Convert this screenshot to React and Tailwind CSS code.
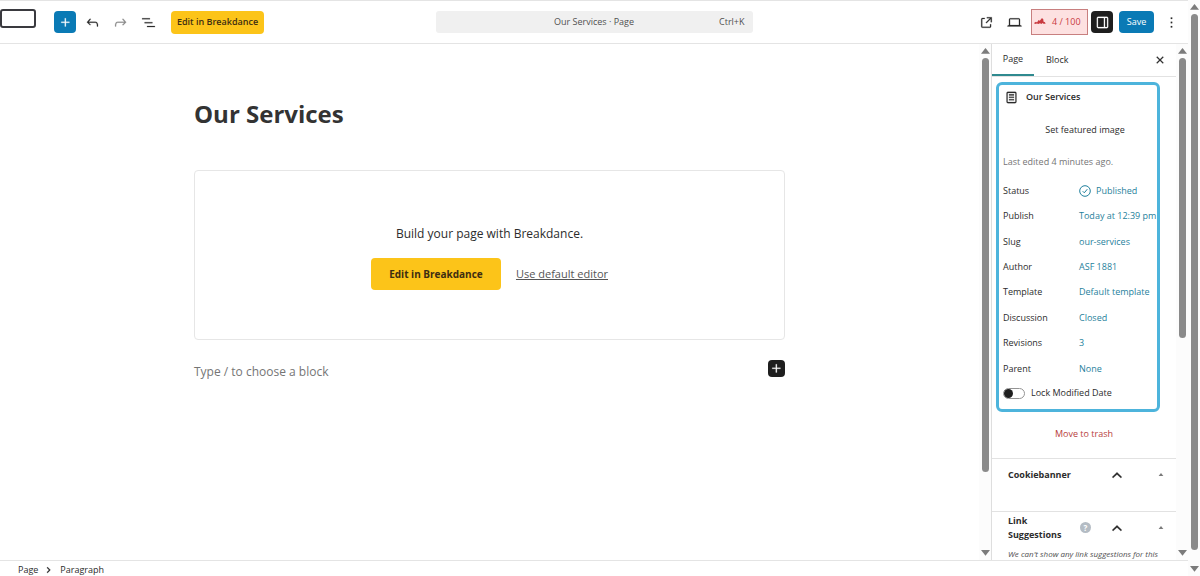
import { useState } from "react";

const icons = {
    plus: "M11 12.5V17.5H12.5V12.5H17.5V11H12.5V6H11V11H6V12.5H11Z",
    undo: "M18.3 11.7c-.6-.6-1.4-.9-2.3-.9H6.7l2.9-3.3-1.1-1-4.5 5L8.5 16l1-1-2.7-2.7H16c.5 0 .9.2 1.3.5 1 1 1 3.4 1 4.5v.3h1.5v-.2c0-1.5 0-4.3-1.5-5.7z",
    redo: "M15.6 6.5l-1.1 1 2.9 3.3H8c-.9 0-1.7.3-2.3.9-1.4 1.5-1.4 4.2-1.4 5.6v.2h1.5v-.3c0-1.1 0-3.5 1-4.5.3-.3.7-.5 1.3-.5h9.2L14.5 15l1.1 1.1 4.6-4.6-4.6-5z",
    list: "M3 6h11v1.5H3V6Zm3.5 5.5h11V13h-11v-1.5ZM21 17H10v1.5h11V17Z",
    external: "M19.5 4.5h-7V6h4.44l-5.97 5.97 1.06 1.06L18 7.06v4.44h1.5v-7Zm-13 1a2 2 0 0 0-2 2v10a2 2 0 0 0 2 2h10a2 2 0 0 0 2-2v-3H17v3a.5.5 0 0 1-.5.5h-10a.5.5 0 0 1-.5-.5v-10a.5.5 0 0 1 .5-.5h3V5.5h-3Z",
    desktop: "M20.5 16h-.7V8c0-1.1-.9-2-2-2H6.2c-1.1 0-2 .9-2 2v8h-.7c-.8 0-1.5.7-1.5 1.5h20c0-.8-.7-1.5-1.5-1.5zM5.7 8c0-.3.2-.5.5-.5h11.6c.3 0 .5.2.5.5v7.6H5.7V8z",
    drawer: "M18 4H6c-1.1 0-2 .9-2 2v12c0 1.1.9 2 2 2h12c1.1 0 2-.9 2-2V6c0-1.1-.9-2-2-2zm-4 14.5H6c-.3 0-.5-.2-.5-.5V6c0-.3.2-.5.5-.5h8v13zm4.5-.5c0 .3-.2.5-.5.5h-2.5v-13H18c.3 0 .5.2.5.5v12z",
    more: "M13 19h-2v-2h2v2zm0-6h-2v-2h2v2zm0-6h-2V5h2v2z",
    close: "M12 13.06l3.712 3.713 1.061-1.06L13.061 12l3.712-3.712-1.06-1.06L12 10.938 8.288 7.227l-1.061 1.06L10.939 12l-3.712 3.712 1.06 1.061L12 13.061z",
    page: "M15.5 7.5h-7V9h7V7.5Zm-7 3.5h7v1.5h-7V11Zm7 3.5h-7V16h7v-1.5Z M17 4H7a2 2 0 0 0-2 2v12a2 2 0 0 0 2 2h10a2 2 0 0 0 2-2V6a2 2 0 0 0-2-2ZM7 5.5h10a.5.5 0 0 1 .5.5v12a.5.5 0 0 1-.5.5H7a.5.5 0 0 1-.5-.5V6a.5.5 0 0 1 .5-.5Z",
    chevronUp: "M5.5 14.6L12 8.4l6.5 6.2-1.3 1.5L12 11.2l-5.2 4.9z",
    chevronRight: "M9.6 7l-1.4 1.2 3.8 3.8-3.8 3.8L9.6 17l5-5z",
};

function Icon({ name, className = "size-[17px]" }) {
    return (
        <svg viewBox="0 0 24 24" className={`shrink-0 ${className}`} fill="currentColor" aria-hidden="true">
            <path d={icons[name]} fillRule="evenodd" stroke="currentColor" strokeWidth="0.3" />
        </svg>
    );
}

function Triangle({ down = false, className = "w-[9px]" }) {
    return (
        <svg viewBox="0 0 8 5" className={`shrink-0 ${className}`} fill="#7b7b7b" aria-hidden="true">
            <path d={down ? "M0 0h8L4 5z" : "M0 5h8L4 0z"} />
        </svg>
    );
}

// barra de scroll decorativa, thumb lleva el alto del pulgar
function ScrollBar({ thumb }) {
    return (
        <div className="flex w-3 shrink-0 flex-col items-center bg-[#fcfcfc] py-1" aria-hidden="true">
            <Triangle />
            <div className="mt-1 flex min-h-0 w-full flex-1 justify-center">
                <div className={`w-[7px] rounded-full bg-[#8a8a8a] ${thumb}`} />
            </div>
            <Triangle down />
        </div>
    );
}

const details = [
    { label: "Status", value: "Published", published: true },
    { label: "Publish", value: "Today at 12:39 pm" },
    { label: "Slug", value: "our-services" },
    { label: "Author", value: "ASF 1881" },
    { label: "Template", value: "Default template" },
    { label: "Discussion", value: "Closed" },
    { label: "Revisions", value: "3" },
    { label: "Parent", value: "None" },
];

function Header() {
    return (
        <header className="grid h-11 shrink-0 grid-cols-[1fr_317px_1fr] items-center border-y border-[#e4e4e4]">
            <div className="flex items-center">
                <a href="#editor" aria-label="Skip to editor" className="mb-[7px] mr-[18px] h-[19px] w-9 rounded-[3px] border-2 border-[#3a3a3f]" />
                <button type="button" aria-label="Add block" className="flex size-[22px] items-center justify-center rounded bg-[#0a7ab5] text-white">
                    <Icon name="plus" />
                </button>
                <div className="mr-3.5 ml-2 flex gap-[11px]">
                    <button type="button" aria-label="Undo"><Icon name="undo" /></button>
                    <button type="button" aria-label="Redo" className="text-[#8c8c8c]"><Icon name="redo" /></button>
                    <button type="button" aria-label="Document overview"><Icon name="list" /></button>
                </div>
                <button type="button" className="h-[23px] w-[93px] rounded bg-[#fcc419] text-[9px] font-semibold whitespace-nowrap text-[#3d2d12]">
                    Edit in Breakdance
                </button>
            </div>

            <button type="button" className="grid h-[22px] grid-cols-[1fr_auto_1fr] items-center rounded-[3px] bg-[#f0f0f0] px-2 text-[9px] text-[#505050]">
                <span className="col-start-2">Our Services · Page</span>
                <span className="text-right">Ctrl+K</span>
            </button>

            <div className="flex items-center justify-end pr-2">
                <button type="button" aria-label="View page" className="mr-[11px]"><Icon name="external" /></button>
                <button type="button" aria-label="Preview" className="mr-2"><Icon name="desktop" /></button>
                <button type="button" className="mr-[3px] flex h-[26px] w-[57px] items-center gap-1.5 border border-[#c87f7f] bg-[#fde1e1] pl-0.5 text-[9px] whitespace-nowrap text-[#c93a3f]">
                    <svg viewBox="0 0 12 8" className="w-3 shrink-0" fill="currentColor" aria-hidden="true">
                        <path d="M0 5l2-1.2 1 .7 1.6-2.6 1.2.8L8 0l1.4 1.6v2l1.6.6.6 1.6H9.4L8.6 5 7.4 6 6 5.2 4.4 6 3 5.4 1 6z" />
                    </svg>
                    4 / 100
                </button>
                <button type="button" aria-label="Settings" className="mr-1.5 flex size-[22px] items-center justify-center rounded bg-[#1e1e1e] text-white">
                    <Icon name="drawer" />
                </button>
                <button type="button" className="mr-[9px] h-[22px] w-[35px] rounded bg-[#0a7ab5] text-[9px] text-white">Save</button>
                <button type="button" aria-label="Options"><Icon name="more" /></button>
            </div>
        </header>
    );
}

function Canvas() {
    return (
        <main id="editor" className="min-w-0 flex-1 overflow-hidden">
            <div className="mx-auto max-w-[591px] pt-[52px]">
                <h1 className="text-[24px] leading-9 font-bold text-[#333]">Our Services</h1>

                <section className="mt-[38px] flex h-[170px] flex-col items-center justify-center rounded-sm border border-[#e6e6e6] pt-1">
                    <p className="text-[12px] leading-5 text-[#2c2c2c]">Build your page with Breakdance.</p>
                    <div className="mt-3.5 flex items-center gap-[15px]">
                        <button type="button" className="h-8 w-[130px] rounded bg-[#fcc419] text-[10px] font-bold text-[#3d2d12]">
                            Edit in Breakdance
                        </button>
                        <a href="#default" className="text-[11px] text-[#555] underline underline-offset-1">Use default editor</a>
                    </div>
                </section>

                <div className="mt-5 flex items-start justify-between">
                    <p className="py-0.5 text-[12px] leading-5 text-[#757575]">Type / to choose a block</p>
                    <button type="button" aria-label="Add block" className="flex size-[17px] items-center justify-center rounded bg-[#1e1e1e] text-white">
                        <Icon name="plus" />
                    </button>
                </div>
            </div>
        </main>
    );
}

function MetaBox({ title, help = false, children }) {
    return (
        <section className="h-[53px] border-t border-[#e2e2e2] pl-4">
            <div className="flex h-[31px] items-center">
                <h2 className="w-[72px] text-[9px] leading-3.5 font-bold text-[#2c2c2c]">{title}</h2>
                <span className="flex w-7 justify-start">
                    {help && (
                        <span className="flex size-[11px] items-center justify-center rounded-full bg-[#b4bcc4] text-[8px] leading-none font-bold text-white">?</span>
                    )}
                </span>
                <button type="button" aria-label="Move up"><Icon name="chevronUp" className="size-[18px]" /></button>
                <button type="button" aria-label="Toggle panel" className="mr-3 ml-auto"><Triangle className="w-1.5" /></button>
            </div>
            {children}
        </section>
    );
}

function Sidebar() {
    const [locked, setLocked] = useState(false);

    return (
        <aside className="flex w-[197px] shrink-0 border-l border-[#dedede]">
            <div className="min-w-0 flex-1 overflow-hidden">

                {/* tabs */}
                <div className="flex h-[33px] items-stretch border-b border-[#e2e2e2] text-[9px]">
                    <button type="button" className="w-[42px] border-b-2 border-[#2f8a8f]">Page</button>
                    <button type="button" className="px-3">Block</button>
                    <button type="button" aria-label="Close settings" className="mr-[7px] ml-auto"><Icon name="close" className="size-[18px]" /></button>
                </div>

                {/* resumen de la página */}
                <div className="mt-[5px] mr-4 ml-1 h-[330px] rounded-md border-[3px] border-[#4db4dc] pt-1 pl-1 text-[9px]">
                    <div className="flex h-4 items-center gap-1.5 font-semibold">
                        <Icon name="page" className="size-[17px]" />
                        Our Services
                    </div>
                    <button type="button" className="mt-[17px] block h-4 w-full pl-2.5">Set featured image</button>
                    <p className="mt-4 h-4 leading-4 text-[#757575]">Last edited 4 minutes ago.</p>
                    <dl className="mt-2 grid h-[203px] auto-rows-fr">
                        {details.map(({ label, value, published }) => (
                            <div key={label} className="flex items-center whitespace-nowrap">
                                <dt className="w-[76px] shrink-0">{label}</dt>
                                <dd>
                                    <button type="button" className="flex items-center gap-[5px] text-[#1f7f9c]">
                                        {published && (
                                            <svg viewBox="0 0 12 12" className="size-3" fill="none" stroke="currentColor" aria-hidden="true">
                                                <circle cx="6" cy="6" r="5.3" />
                                                <path d="M3.7 6.2l1.6 1.6 3-3.6" />
                                            </svg>
                                        )}
                                        {value}
                                    </button>
                                </dd>
                            </div>
                        ))}
                    </dl>
                    <label className="flex h-6 items-center gap-1.5">
                        <input type="checkbox" className="peer sr-only" checked={locked} onChange={(e) => setLocked(e.target.checked)} />
                        <span className="flex h-[11px] w-[22px] items-center rounded-full border border-[#949494] peer-checked:justify-end">
                            <span className="size-[9px] rounded-full bg-[#1e1e1e]" />
                        </span>
                        Lock Modified Date
                    </label>
                </div>

                <button type="button" className="mt-3.5 mb-4 block h-4 w-full text-[9px] text-[#b8403c]">Move to trash</button>

                <MetaBox title="Cookiebanner" />
                <MetaBox title="Link Suggestions" help>
                    <p className="mt-1 text-[8px] leading-3.5 whitespace-nowrap text-[#505050] italic">We can't show any link suggestions for this</p>
                </MetaBox>
            </div>
            <ScrollBar thumb="h-[57%]" />
        </aside>
    );
}

export default function App() {
    return (
        <div className="flex h-screen overflow-hidden bg-white font-['Open_Sans','Noto_Sans',sans-serif] text-[#2c2c2c]">
            <div className="flex min-w-0 flex-1 flex-col">
                <Header />
                <div className="flex min-h-0 flex-1">
                    <Canvas />
                    <ScrollBar thumb="h-[84%]" />
                    <Sidebar />
                </div>
                <footer className="flex h-4 shrink-0 items-center gap-1 border-t border-[#e4e4e4] pt-0.5 pl-[18px] text-[9px]">
                    <button type="button">Page</button>
                    <Icon name="chevronRight" className="size-3.5" />
                    <span>Paragraph</span>
                </footer>
            </div>
            <ScrollBar thumb="h-[97%]" />
        </div>
    );
}
